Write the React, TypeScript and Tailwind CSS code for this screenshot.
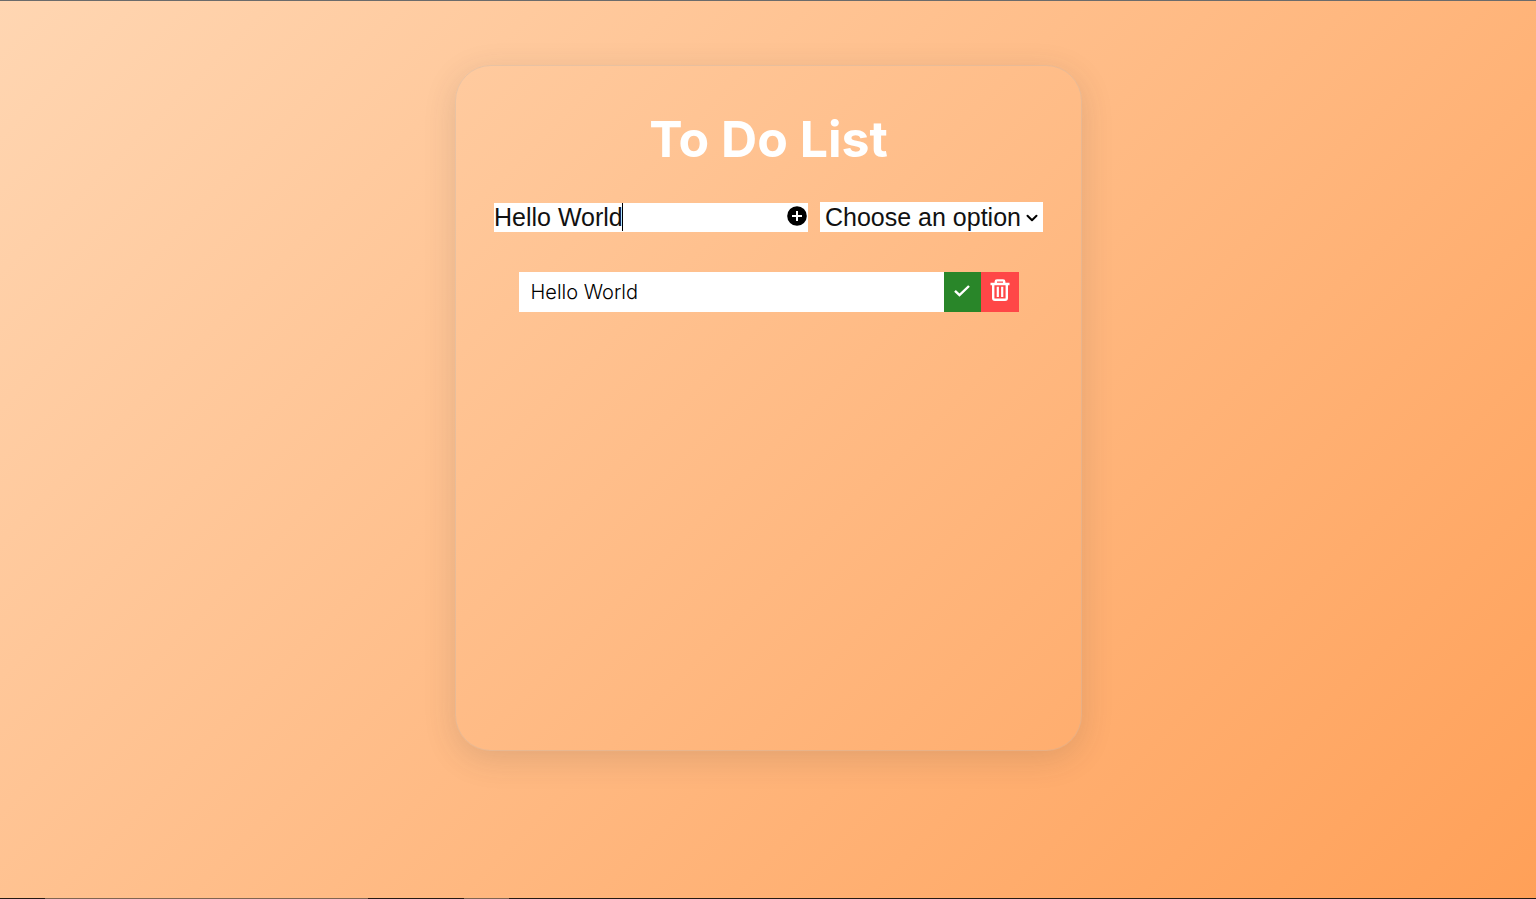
import { useState } from "react";
import { ChevronDown } from "lucide-react";

function PlusCircle() {
  return (
    <svg width="20" height="20" viewBox="0 0 20 20">
      <circle cx="10" cy="10" r="9.8" fill="currentColor" />
      <path d="M10 5v10M5 10h10" stroke="white" strokeWidth="2" />
    </svg>
  );
}

function Check() {
  return (
    <svg width="16" height="12" viewBox="0 0 16 12" fill="none" stroke="currentColor" strokeWidth="2.4">
      <path d="M1 5.8 5.5 10.2 15 1" />
    </svg>
  );
}

function Trash() {
  return (
    <svg width="20" height="22" viewBox="0 0 20 22" fill="none" stroke="currentColor" strokeWidth="2.4" strokeLinejoin="round">
      <path d="M0.5 5h19M5.8 4.6V2.6q0-1.2 1.2-1.2h6q1.2 0 1.2 1.2v2M3.2 5.5V19q0 1.7 1.7 1.7h10.2q1.7 0 1.7-1.7V5.5" />
      <path d="M7.8 7.8v10.2M12.2 7.8v10.2" strokeWidth="2.2" />
    </svg>
  );
}

export default function App() {
  const [text, setText] = useState("Hello World");
  const [filter, setFilter] = useState("");
  const [todos, setTodos] = useState(["Hello World"]);
  const add = () => text && setTodos([...todos, text]);

  return (
    <div className="flex min-h-screen flex-col border-t border-t-[#6b6b6b] bg-linear-[135deg,#ffd6b2,#ffa058] font-['Inter',sans-serif]">
      <main className="flex flex-1 justify-center pt-16 pr-4 pl-[17px]">
        <section className="mb-16 h-fit min-h-[calc(100vh-213px)] w-full max-w-[627px] rounded-[36px] border border-[#b4b4b4]/30 px-[38px] pt-[43px] shadow-[0_8px_32px_rgba(60,60,60,0.15)]">
          <h1 className="text-center text-[50px] leading-[60px] font-bold text-white">To Do List</h1>
          <form
            className="mt-[33px] flex items-end gap-3 font-['Liberation_Sans',sans-serif] text-[25px] leading-7"
            onSubmit={(e) => {
              e.preventDefault();
              add();
            }}
          >
            <div className="relative flex h-[29px] min-w-0 flex-1 items-center bg-white">
              <input
                aria-label="New task"
                autoFocus
                value={text}
                onChange={(e) => setText(e.target.value)}
                className="h-full w-full min-w-0 text-[#111111] caret-transparent outline-none"
              />
              <span aria-hidden="true" className="pointer-events-none absolute inset-y-0 left-0 flex pb-px">
                <span className="invisible whitespace-pre">{text}</span>
                <span className="-ml-px w-px bg-black" />
              </span>
              <button type="submit" aria-label="Add task" className="mr-px mb-1 text-black">
                <PlusCircle />
              </button>
            </div>
            <div className="relative h-[30px] w-[223px] bg-white">
              <select
                aria-label="Filter tasks"
                value={filter}
                onChange={(e) => setFilter(e.target.value)}
                className="h-full w-full appearance-none pl-[5px] text-[#111111] outline-none"
              >
                <option value="">Choose an option</option>
                <option value="all">All</option>
                <option value="done">Completed</option>
              </select>
              <ChevronDown size={18} strokeWidth={2.7} className="pointer-events-none absolute top-[7px] right-[2px] text-black" />
            </div>
          </form>
          <ul className="mx-auto mt-10 max-w-[500px]">
            {todos.map((todo, i) => (
              <li key={i} className="flex h-10 bg-white text-xl">
                <span className="flex flex-1 items-center px-3 font-light text-black">{todo}</span>
                <button aria-label="Complete task" className="flex w-[37px] items-center justify-center bg-[#298629] pb-0.5 text-white">
                  <Check />
                </button>
                <button
                  aria-label="Delete task"
                  onClick={() => setTodos(todos.filter((_, n) => n !== i))}
                  className="flex w-[38px] items-center justify-center bg-[#ff4747] pb-1 text-white"
                >
                  <Trash />
                </button>
              </li>
            ))}
          </ul>
        </section>
      </main>
      <footer className="flex h-px bg-[#241a14]">
        <span className="ml-[45px] w-[323px] bg-[#806552]" />
        <span className="ml-24 w-[45px] bg-[#806552]" />
      </footer>
    </div>
  );
}
